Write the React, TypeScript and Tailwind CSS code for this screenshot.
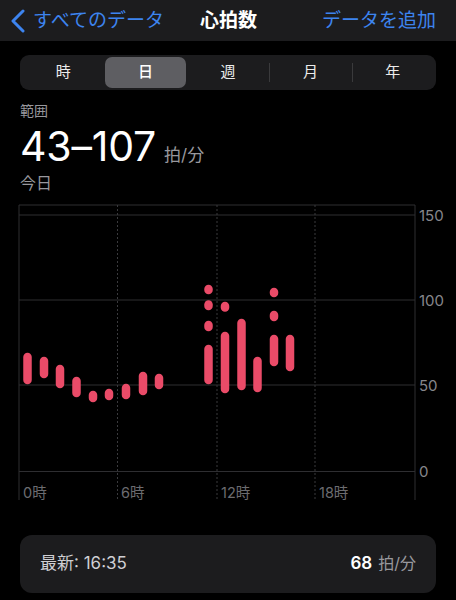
import React from "react";

const font = { fontFamily: 'Inter, "Noto Sans CJK JP", sans-serif' };

const segments = ["時", "日", "週", "月", "年"];

// [centerX, y1, y2] in chart coordinates (chart top = page y 200)
const bars: [number, number, number][] = [
  [27.5, 157, 180],
  [44, 161, 174],
  [60, 169, 184],
  [76.5, 181, 193],
  [93, 195, 198],
  [109, 193, 196],
  [126, 188, 195],
  [143, 176, 191],
  [159, 178, 185],
  [208.5, 89, 90],
  [208.5, 104.5, 106],
  [208.5, 125, 127],
  [208.5, 149, 180],
  [225, 106, 107.5],
  [225, 136, 189],
  [241.5, 123, 186],
  [257.5, 161, 188],
  [274, 92, 93],
  [274, 115, 117],
  [274, 139, 162],
  [290, 139, 167],
];

const yLabels = [
  { v: "150", y: 15 },
  { v: "100", y: 100 },
  { v: "50", y: 185 },
  { v: "0", y: 271.5 },
];

const xLabels = [
  { v: "0時", x: 23 },
  { v: "6時", x: 121 },
  { v: "12時", x: 221 },
  { v: "18時", x: 319 },
];

function Chart() {
  return (
    <svg width="456" height="310" viewBox="0 0 456 310" className="block">
      <line x1="19" y1="5" x2="415" y2="5" stroke="#2e2e31" strokeWidth="1" />
      {yLabels.map((l) => (
        <line key={l.v} x1="19" y1={l.y} x2="415" y2={l.y} stroke="#2e2e31" strokeWidth="1" />
      ))}
      <line x1="19" y1="5" x2="19" y2="300" stroke="#2e2e31" strokeWidth="1" />
      <line x1="415" y1="5" x2="415" y2="300" stroke="#2e2e31" strokeWidth="1" />
      {[117.5, 217, 315].map((x) => (
        <line
          key={x}
          x1={x}
          y1="5"
          x2={x}
          y2="300"
          stroke="#3a3a3d"
          strokeWidth="1"
          strokeDasharray="2 2"
        />
      ))}
      {bars.map(([x, y1, y2], i) => (
        <line
          key={i}
          x1={x}
          y1={y1}
          x2={x}
          y2={y2}
          stroke="#ea4b68"
          strokeWidth="8.5"
          strokeLinecap="round"
        />
      ))}
      {yLabels.map((l) => (
        <text
          key={l.v}
          x="419"
          y={l.y + 5.5}
          fill="#86868b"
          fontSize="15"
          style={font}
        >
          {l.v}
        </text>
      ))}
      {xLabels.map((l) => (
        <text key={l.v} x={l.x} y="298" fill="#6c6c70" fontSize="14.5" style={font}>
          {l.v}
        </text>
      ))}
    </svg>
  );
}

export default function App() {
  return (
    <div className="w-[456px] h-[600px] bg-black text-white overflow-hidden" style={font}>
      <header className="h-[41px] bg-[#1c1c1e] flex items-center pl-[8px] pr-[20px]">
        <div className="flex items-center gap-[5px] text-[#3d84ef]">
          <svg width="20" height="24" viewBox="0 0 20 24" fill="none">
            <path d="M15 2 L5 12 L15 22" stroke="#3d84ef" strokeWidth="3" strokeLinecap="round" strokeLinejoin="round" />
          </svg>
          <span className="text-[19px] leading-none">すべてのデータ</span>
        </div>
        <span className="text-[19px] font-bold leading-none ml-[36px]">心拍数</span>
        <span className="text-[19px] text-[#3d84ef] leading-none ml-auto">データを追加</span>
      </header>

      <div className="mx-5 mt-[14px] h-[35px] rounded-[9px] bg-[#1c1c1e] flex items-center px-[2px]">
        {segments.map((s, i) => (
          <div key={s} className="flex-1 flex items-center h-full relative">
            {i >= 3 && <div className="absolute left-0 top-[8px] bottom-[8px] w-px bg-[#3a3a3c]" />}
            <div
              className={
                i === 1
                  ? "flex-1 h-[31px] mx-[1px] rounded-[7px] bg-[#5e5e62] flex items-center justify-center text-[15px] font-medium"
                  : "flex-1 flex items-center justify-center text-[15px] text-[#ececec]"
              }
            >
              {s}
            </div>
          </div>
        ))}
      </div>

      <div className="px-5 mt-[11px]">
        <div className="text-[14px] leading-[20px] text-[#98989d]">範囲</div>
        <div className="flex items-baseline leading-none mt-[5px]">
          <span className="text-[41px] font-normal tracking-[-0.2px]">43–107</span>
          <span className="text-[17px] text-[#98989d] ml-[8px]">拍/分</span>
        </div>
        <div className="text-[16px] leading-[22px] text-[#98989d] mt-[5px]">今日</div>
      </div>

      <div className="mt-[6px]">
        <Chart />
      </div>

      <div className="mx-5 mt-[25px] h-[58px] rounded-[12px] bg-[#1c1c1e] flex items-center justify-between px-5">
        <span className="text-[17px] text-[#cfcfd4]">最新: 16:35</span>
        <span className="flex items-baseline gap-[6px]">
          <span className="text-[17px] font-semibold">68</span>
          <span className="text-[16px] text-[#98989d]">拍/分</span>
        </span>
      </div>
    </div>
  );
}
